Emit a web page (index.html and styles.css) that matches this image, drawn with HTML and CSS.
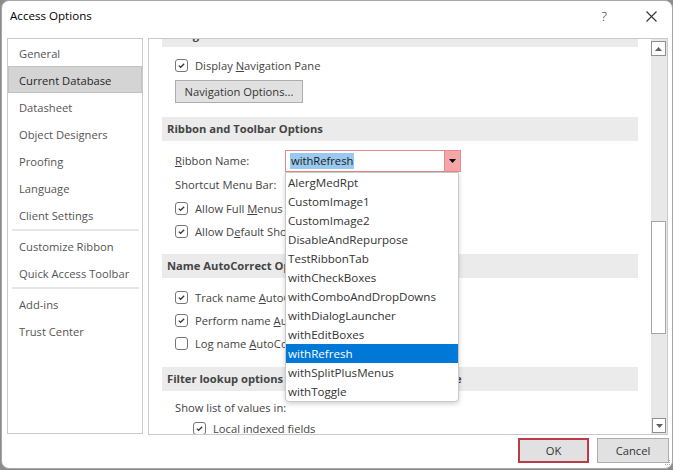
FILE: index.html
```html
<!DOCTYPE html>
<html lang="en">
<head>
<meta charset="utf-8">
<title>Access Options</title>
<link rel="stylesheet" href="styles.css">
</head>
<body>
<div class="dialog">
  <div class="titlebar">
    <span class="title">Access Options</span>
    <span class="help">?</span>
    <svg class="close" width="11" height="11" viewBox="0 0 11 11"><path d="M0.5 0.5 L10.5 10.5 M10.5 0.5 L0.5 10.5" stroke="#333" stroke-width="1.1" fill="none"/></svg>
  </div>
  <div class="main">
    <nav class="nav">
      <div class="nav-item">General</div>
      <div class="nav-item selected">Current Database</div>
      <div class="nav-item">Datasheet</div>
      <div class="nav-item">Object Designers</div>
      <div class="nav-item">Proofing</div>
      <div class="nav-item">Language</div>
      <div class="nav-item">Client Settings</div>
      <div class="nav-sep"></div>
      <div class="nav-item">Customize Ribbon</div>
      <div class="nav-item">Quick Access Toolbar</div>
      <div class="nav-sep"></div>
      <div class="nav-item">Add-ins</div>
      <div class="nav-item">Trust Center</div>
    </nav>
    <div class="panel">
      <div class="pane">
        <div class="pane-content">
          <div class="band">Navigation</div>
          <label class="row cb first">
            <span class="box checked"><svg width="11" height="11" viewBox="0 0 11 11"><path d="M2.8 5.6 L4.6 7.3 L8.2 3.8" stroke="#333" stroke-width="1.2" fill="none"/></svg></span>
            <span>Display <u>N</u>avigation Pane</span>
          </label>
          <div class="btnrow"><span class="btn">Navigation Options...</span></div>

          <div class="band b-ribbon">Ribbon and Toolbar Options</div>
          <div class="row ribbon-row">
            <span class="lbl"><u>R</u>ibbon Name:</span>
            <div class="combo">
              <div class="combo-text"><span class="sel-text">withRefresh</span></div>
              <div class="combo-btn"><svg width="7" height="4" viewBox="0 0 7 4"><path d="M0 0 H7 L3.5 4 Z" fill="#000"/></svg></div>
              <ul class="list">
                <li>AlergMedRpt</li>
                <li>CustomImage1</li>
                <li>CustomImage2</li>
                <li>DisableAndRepurpose</li>
                <li>TestRibbonTab</li>
                <li>withCheckBoxes</li>
                <li>withComboAndDropDowns</li>
                <li>withDialogLauncher</li>
                <li>withEditBoxes</li>
                <li class="active">withRefresh</li>
                <li>withSplitPlusMenus</li>
                <li>withToggle</li>
              </ul>
            </div>
          </div>
          <div class="row">Shortcut Menu Bar:</div>
          <label class="row cb tall">
            <span class="box checked"><svg width="11" height="11" viewBox="0 0 11 11"><path d="M2.8 5.6 L4.6 7.3 L8.2 3.8" stroke="#333" stroke-width="1.2" fill="none"/></svg></span>
            <span>Allow Full <u>M</u>enus</span>
          </label>
          <label class="row cb">
            <span class="box checked"><svg width="11" height="11" viewBox="0 0 11 11"><path d="M2.8 5.6 L4.6 7.3 L8.2 3.8" stroke="#333" stroke-width="1.2" fill="none"/></svg></span>
            <span>Allow D<u>e</u>fault Shortcut Menus</span>
          </label>

          <div class="band b-auto">Name AutoCorrect Options</div>
          <label class="row cb first">
            <span class="box checked"><svg width="11" height="11" viewBox="0 0 11 11"><path d="M2.8 5.6 L4.6 7.3 L8.2 3.8" stroke="#333" stroke-width="1.2" fill="none"/></svg></span>
            <span>Track name <u>A</u>utoCorrect info</span>
          </label>
          <label class="row cb">
            <span class="box checked"><svg width="11" height="11" viewBox="0 0 11 11"><path d="M2.8 5.6 L4.6 7.3 L8.2 3.8" stroke="#333" stroke-width="1.2" fill="none"/></svg></span>
            <span>Perform name <u>A</u>utoCorrect</span>
          </label>
          <label class="row cb">
            <span class="box"></span>
            <span>Log name <u>A</u>utoCorrect changes</span>
          </label>

          <div class="band b-filter">Filter lookup options for Ribbons Examples Database</div>
          <div class="row short">Show list of values in:</div>
          <label class="row cb indent">
            <span class="box checked"><svg width="11" height="11" viewBox="0 0 11 11"><path d="M2.8 5.6 L4.6 7.3 L8.2 3.8" stroke="#333" stroke-width="1.2" fill="none"/></svg></span>
            <span>Local indexed fields</span>
          </label>
        </div>
      </div>
      <div class="scrollbar">
        <div class="sb-btn up"><svg width="7" height="4" viewBox="0 0 7 4"><path d="M0 4 H7 L3.5 0 Z" fill="#606060"/></svg></div>
        <div class="sb-thumb"></div>
        <div class="sb-fill"></div>
        <div class="sb-btn down"><svg width="7" height="4" viewBox="0 0 7 4"><path d="M0 0 H7 L3.5 4 Z" fill="#606060"/></svg></div>
      </div>
    </div>
  </div>
  <div class="footer">
    <span class="fbtn ok">OK</span>
    <span class="fbtn">Cancel</span>
  </div>
  <svg class="grip" width="7" height="7" viewBox="0 0 7 7"><g fill="#a8a8a8"><rect x="5" y="0" width="1" height="1"/><rect x="3" y="2" width="1" height="1"/><rect x="5" y="2" width="1" height="1"/><rect x="1" y="4" width="1" height="1"/><rect x="3" y="4" width="1" height="1"/><rect x="5" y="4" width="1" height="1"/></g></svg>
</div>
</body>
</html>
```
FILE: styles.css
```css
* { box-sizing: border-box; }
html, body { margin: 0; padding: 0; height: 100%; }
body {
  background: #8c8c8c;
  font-family: "Open Sans", "Noto Sans", sans-serif;
  font-size: 11.2px;
  color: #444;
  overflow: hidden;
}
.dialog {
  position: relative;
  width: 672px;
  height: 469px;
  margin-left: 1px;
  background: #fff;
  border: 1px solid #a6a6a6;
  border-radius: 8px;
  display: flex;
  flex-direction: column;
}
.titlebar {
  height: 37px;
  flex: none;
  display: flex;
  align-items: flex-start;
  padding: 6px 15px 0 8px;
  line-height: 18px;
}
.title { font-size: 11.6px; color: #000; }
.help {
  margin-left: auto;
  width: 14px;
  text-align: center;
  font-size: 13.5px;
  color: #222;
  font-weight: 300;
}
.close { margin-left: 35px; margin-top: 4px; }

.main {
  height: 397px;
  flex: none;
  display: flex;
  align-items: flex-start;
  gap: 5px;
  padding-left: 5px;
}
.nav {
  width: 136px;
  height: 396px;
  border: 1px solid #cacaca;
  display: flex;
  flex-direction: column;
}
.nav-item {
  height: 27px;
  line-height: 27px;
  padding-left: 10px;
  color: #555;
  border: 1px solid transparent;
  white-space: nowrap;
}
.nav-item.selected {
  background: #d4d4d4;
  border-color: #c2c2c2;
  color: #262626;
}
.nav-sep {
  height: 2px;
  margin: 1px 3px 1px 4px;
  background: #e6e6e6;
}

.panel {
  width: 520px;
  height: 397px;
  border: 1px solid #cacaca;
  display: flex;
}
.pane {
  flex: 1;
  overflow: hidden;
  position: relative;
}
.pane-content { margin-top: -16px; }
.band {
  height: 24px;
  line-height: 24px;
  margin: 0 13px;
  padding-left: 5px;
  background: #ebebeb;
  font-weight: 700;
  color: #444;
  white-space: nowrap;
  overflow: hidden;
}
.b-ribbon { margin-top: 14px; }
.b-auto { margin-top: 11px; }
.b-filter { margin-top: 12px; }

.row {
  height: 23px;
  display: flex;
  align-items: center;
  padding-left: 26px;
  white-space: nowrap;
  color: #444;
}
.row.first { margin-top: 7px; }
.row.tall { height: 24px; }
.row.short { height: 20px; margin-top: 6px; }
.row.indent { padding-left: 44px; }
.row.cb { gap: 7px; }
.b-auto + .row.first { margin-top: 8px; }
.box {
  width: 13px;
  height: 13px;
  flex: none;
  border: 1px solid #767676;
  border-radius: 3px;
  background: #fff;
  display: flex;
  align-items: center;
  justify-content: center;
}
.box svg { display: block; }

.btnrow { padding-left: 26px; margin-top: 3px; height: 23px; }
.btn {
  display: flex;
  align-items: center;
  justify-content: center;
  width: 128px;
  height: 23px;
  background: #e1e1e1;
  border: 1px solid #adadad;
  color: #333;
}

.ribbon-row {
  margin-top: 8px;
  height: 24px;
  align-items: flex-start;
}
.ribbon-row .lbl { width: 110px; line-height: 23px; flex: none; }
.combo {
  position: relative;
  margin-top: 1px;
  width: 176px;
  height: 22px;
  border: 1px solid #e48a8c;
  display: flex;
}
.combo-text {
  flex: 1;
  padding: 2px 0 0 4px;
}
.sel-text {
  display: inline-block;
  background: #99c9ef;
  color: #1a1a1a;
  line-height: 16px;
  height: 16px;
  padding: 0 1px;
}
.combo-btn {
  width: 16px;
  background: #f4a6a8;
  border-left: 1px solid #e48a8c;
  display: flex;
  align-items: center;
  justify-content: center;
}
.combo-btn svg { display: block; }
.list {
  position: absolute;
  left: -1px;
  top: 21px;
  width: 174px;
  margin: 0;
  padding: 0;
  list-style: none;
  background: #fff;
  border: 1px solid #c9c9c9;
  border-radius: 0 0 4px 4px;
  box-shadow: 0 2px 5px rgba(0,0,0,0.18);
  z-index: 2;
}
.list li {
  height: 19px;
  line-height: 19px;
  padding-left: 2px;
  color: #333;
  font-size: 11.6px;
}
.list li.active {
  background: #0078d7;
  color: #fff;
}

.scrollbar {
  width: 16px;
  background: #e8e8e8;
  display: flex;
  flex-direction: column;
  align-items: flex-start;
}
.sb-btn {
  width: 15px;
  height: 15px;
  border: 1px solid #8f8f8f;
  background: #fdfdfd;
  display: flex;
  align-items: center;
  justify-content: center;
}
.sb-btn svg { display: block; }
.sb-btn.up { margin-top: 2px; }
.sb-btn.down { margin-left: 1px; width: 14px; margin-bottom: 1px; }
.sb-thumb {
  margin-top: 165px;
  width: 15px;
  height: 113px;
  background: #fff;
  border: 1px solid #a5a5a5;
}
.sb-fill { flex: 1; }

.footer {
  flex: 1;
  display: flex;
  justify-content: flex-end;
  align-items: flex-start;
  gap: 8px;
  padding: 3px 3px 0 0;
}
.fbtn {
  width: 72px;
  height: 25px;
  display: flex;
  align-items: center;
  justify-content: center;
  background: #e1e1e1;
  border: 1px solid #adadad;
  color: #333;
}
.fbtn.ok {
  width: 71px;
  border: 2px solid #bb3b48;
}
.grip {
  position: absolute;
  right: 1px;
  bottom: 1px;
}
```
